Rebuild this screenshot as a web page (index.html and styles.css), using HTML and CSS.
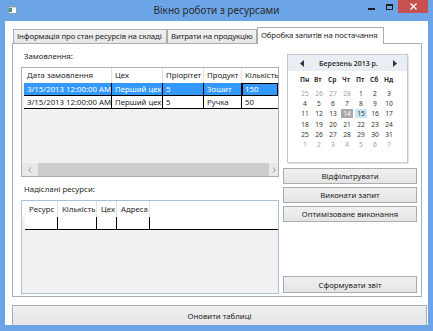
FILE: index.html
```html
<!DOCTYPE html>
<html lang="uk">
<head>
<meta charset="utf-8">
<title>Вікно роботи з ресурсами</title>
<link rel="stylesheet" href="styles.css">
</head>
<body>
<div class="window">
  <div class="titlebar">
    <div class="tb-left">
      <svg class="app-icon" width="9" height="8" viewBox="0 0 9 8">
        <rect x="0.5" y="0.5" width="8" height="7" fill="#fff" stroke="#8a9aa8"/>
        <rect x="1" y="2" width="3" height="4" fill="#3f9a86"/>
        <rect x="1" y="1" width="7" height="1" fill="#c9d3dc"/>
      </svg>
    </div>
    <div class="title">Вікно роботи з ресурсами</div>
    <div class="caption">
      <div class="cbtn cmin"><span class="min-glyph"></span></div>
      <div class="cbtn cmax"><span class="max-glyph"></span></div>
      <div class="cbtn cclose">
        <svg width="7" height="7" viewBox="0 0 7 7"><path d="M0.5 0.5 L6.5 6.5 M6.5 0.5 L0.5 6.5" stroke="#fff" stroke-width="1.4"/></svg>
      </div>
    </div>
  </div>

  <div class="client">
    <div class="tabs">
      <div class="tab-headers">
        <div class="tab t1">Інформація про стан ресурсів на складі</div>
        <div class="tab t2">Витрати на продукцію</div>
        <div class="tab t3 active">Обробка запитів на постачання</div>
      </div>
      <div class="tab-panel">
        <div class="col-left">
          <div class="label">Замовлення:</div>
          <div class="grid orders">
            <div class="g-head">
              <div class="hc o1">Дата замовлення</div>
              <div class="hc o2">Цех</div>
              <div class="hc o3">Пріорітет</div>
              <div class="hc o4">Продукт</div>
              <div class="hc o5">Кількість</div>
            </div>
            <div class="g-row sel">
              <div class="c o1">3/15/2013 12:00:00 AM</div>
              <div class="c o2">Перший цех</div>
              <div class="c o3">5</div>
              <div class="c o4">Зошит</div>
              <div class="c o5 focus">150</div>
            </div>
            <div class="g-row">
              <div class="c o1">3/15/2013 12:00:00 AM</div>
              <div class="c o2">Перший цех</div>
              <div class="c o3">5</div>
              <div class="c o4">Ручка</div>
              <div class="c o5">50</div>
            </div>
            <div class="g-fill"></div>
            <div class="hscroll">
              <div class="sb-arrow sb-left">
                <svg width="4" height="6" viewBox="0 0 4 6"><path d="M3 0.5 L1 3 L3 5.5" fill="none" stroke="#9a9a9a"/></svg>
              </div>
              <div class="sb-thumb"></div>
              <div class="sb-arrow sb-right">
                <svg width="4" height="6" viewBox="0 0 4 6"><path d="M1 0.5 L3 3 L1 5.5" fill="none" stroke="#9a9a9a"/></svg>
              </div>
            </div>
          </div>
          <div class="label">Надіслані ресурси:</div>
          <div class="grid sent">
            <div class="g-head">
              <div class="hc s1">Ресурс</div>
              <div class="hc s2">Кількість</div>
              <div class="hc s3">Цех</div>
              <div class="hc s4">Адреса</div>
            </div>
            <div class="g-row">
              <div class="c s1"></div>
              <div class="c s2"></div>
              <div class="c s3"></div>
              <div class="c s4"></div>
              <div class="c s-rest"></div>
            </div>
            <div class="g-fill"></div>
          </div>
        </div>

        <div class="col-right">
          <div class="calendar">
            <div class="cal-head">
              <svg width="4" height="7" viewBox="0 0 4 7"><path d="M4 0 L0 3.5 L4 7 Z" fill="#333"/></svg>
              <span class="cal-title">Березень 2013 р.</span>
              <svg width="4" height="7" viewBox="0 0 4 7"><path d="M0 0 L4 3.5 L0 7 Z" fill="#333"/></svg>
            </div>
            <div class="cal-grid">
              <div class="dn">Пн</div><div class="dn">Вт</div><div class="dn">Ср</div><div class="dn">Чт</div><div class="dn">Пт</div><div class="dn">Сб</div><div class="dn">Нд</div>
              <div class="d out"><span>25</span></div><div class="d out"><span>26</span></div><div class="d out"><span>27</span></div><div class="d out"><span>28</span></div><div class="d"><span>1</span></div><div class="d"><span>2</span></div><div class="d"><span>3</span></div>
              <div class="d"><span>4</span></div><div class="d"><span>5</span></div><div class="d"><span>6</span></div><div class="d"><span>7</span></div><div class="d"><span>8</span></div><div class="d"><span>9</span></div><div class="d"><span>10</span></div>
              <div class="d"><span>11</span></div><div class="d"><span>12</span></div><div class="d"><span>13</span></div><div class="d today"><span>14</span></div><div class="d selected"><span>15</span></div><div class="d"><span>16</span></div><div class="d"><span>17</span></div>
              <div class="d"><span>18</span></div><div class="d"><span>19</span></div><div class="d"><span>20</span></div><div class="d"><span>21</span></div><div class="d"><span>22</span></div><div class="d"><span>23</span></div><div class="d"><span>24</span></div>
              <div class="d"><span>25</span></div><div class="d"><span>26</span></div><div class="d"><span>27</span></div><div class="d"><span>28</span></div><div class="d"><span>29</span></div><div class="d"><span>30</span></div><div class="d"><span>31</span></div>
              <div class="d out"><span>1</span></div><div class="d out"><span>2</span></div><div class="d out"><span>3</span></div><div class="d out"><span>4</span></div><div class="d out"><span>5</span></div><div class="d out"><span>6</span></div><div class="d out"><span>7</span></div>
            </div>
          </div>
          <button class="btn b-filter">Відфільтрувати</button>
          <button class="btn b-run">Виконати запит</button>
          <button class="btn b-opt">Оптимізоване виконання</button>
          <button class="btn b-report">Сформувати звіт</button>
        </div>
      </div>
    </div>
    <button class="btn refresh">Оновити таблиці</button>
  </div>
</div>
</body>
</html>
```

FILE: styles.css
```css
* { box-sizing: border-box; margin: 0; padding: 0; }

html, body {
  width: 433px;
  height: 331px;
  overflow: hidden;
}

body {
  font-family: "Noto Sans", "Open Sans", sans-serif;
  font-size: 7.8px;
  color: #1e1e1e;
  background: #6ba5e8;
}

.window {
  width: 433px;
  height: 331px;
  background: #6ba5e8;
  display: flex;
  flex-direction: column;
}

/* ---------- title bar ---------- */
.titlebar {
  flex: none;
  height: 21px;
  display: grid;
  grid-template-columns: 1fr auto 1fr;
}

.tb-left { display: flex; }
.app-icon { margin: 6px 0 0 8px; }

.title {
  font-size: 10px;
  line-height: 21px;
  color: #2a2a2a;
}

.caption {
  justify-self: end;
  display: flex;
  margin-right: 5px;
  height: 13px;
}

.cbtn {
  height: 13px;
  display: flex;
  align-items: center;
  justify-content: center;
}

.cmin { width: 18px; }
.cmax { width: 18px; }
.cclose { width: 30px; background: #c75050; }

.min-glyph {
  width: 7px;
  height: 2px;
  background: #1b1b1b;
  margin-top: 4px;
}

.max-glyph {
  width: 7px;
  height: 6px;
  border: 1px solid #1b1b1b;
  border-top-width: 2px;
}

/* ---------- client ---------- */
.client {
  flex: 1;
  margin: 0 5px 6px;
  background: #fff;
  padding: 6px 1px 0 7px;
  display: flex;
  flex-direction: column;
}

.tabs {
  margin-right: 5px;
  display: flex;
  flex-direction: column;
}

.tab-headers {
  height: 16px;
  display: flex;
  align-items: flex-start;
  position: relative;
  z-index: 2;
}

.tab {
  flex: none;
  height: 14px;
  margin-top: 2px;
  border: 1px solid #acacac;
  border-bottom: none;
  background: linear-gradient(#f2f2f2, #e6e6e6);
  padding-left: 3px;
  line-height: 13px;
  white-space: nowrap;
  overflow: hidden;
  color: #1e1e1e;
  letter-spacing: -0.12px;
}

.t1 { width: 154px; margin-left: 1px; }
.t2 { width: 90px; }
.t3 { width: 127px; }

.tab.active {
  height: 17px;
  margin-top: 0;
  background: #fff;
  line-height: 15px;
}

.tab-panel {
  height: 254px;
  border: 1px solid #acacac;
  background: #fff;
  display: flex;
  gap: 4px;
  padding: 0 3px 1px 8px;
  position: relative;
  z-index: 1;
}

/* ---------- left column ---------- */
.col-left {
  width: 258px;
  display: flex;
  flex-direction: column;
}

.label {
  height: 23px;
  padding: 6px 0 0 3px;
  line-height: 12px;
  white-space: nowrap;
}

.grid {
  width: 258px;
  border: 1px solid #abadb3;
  background: #f1f1f1;
  display: flex;
  flex-direction: column;
  overflow: hidden;
}

.orders { height: 110px; }
.sent { height: 94px; border-color: #a9c0da; }

.g-head {
  flex: none;
  height: 15px;
  background: #fff;
  display: flex;
  padding-left: 2px;
}

.sent .g-head { height: 16px; padding-left: 3px; }

.hc {
  flex: none;
  border-right: 1px solid #e3e3e3;
  padding-left: 3px;
  white-space: nowrap;
  overflow: hidden;
  line-height: 15px;
}

.sent .hc { padding-left: 4px; line-height: 17px; }

.g-row {
  flex: none;
  display: flex;
  padding-left: 2px;
  height: 13px;
}

.sent .g-row { padding-left: 3px; }

.c {
  flex: none;
  height: 13px;
  border-right: 1px solid #000;
  border-bottom: 1px solid #000;
  background: #fff;
  padding-left: 3px;
  line-height: 12px;
  white-space: nowrap;
  overflow: hidden;
}

.g-row.sel .c {
  background: #3399ff;
  color: #fff;
}

.c.focus {
  outline: 1px solid #000;
  outline-offset: -1px;
}

.o1 { width: 88px; }
.o2 { width: 51px; }
.o3 { width: 41px; }
.o4 { width: 38px; }
.o5 { width: 36px; border-right: none; }
.hc.o5 { border-right: none; }

.s1 { width: 33px; }
.s2 { width: 39px; }
.s3 { width: 20px; }
.s4 { width: 33px; }
.s-rest { flex: 1; border-right: none; }

.g-fill { flex: 1; }

.hscroll {
  flex: none;
  height: 13px;
  display: flex;
  background: #e8e8e8;
}

.sb-arrow {
  display: flex;
  align-items: center;
  justify-content: center;
}

.sb-left { width: 16px; }
.sb-right { width: 9px; }

.sb-thumb {
  flex: 1;
  background: #cdcdcd;
}

/* ---------- right column ---------- */
.col-right {
  width: 135px;
  display: flex;
  flex-direction: column;
}

.calendar {
  width: 121px;
  height: 109px;
  margin: 10px 0 0 4px;
  border: 1px solid #c4c8cc;
  background: #fff;
  box-shadow: 1px 1px 0 #e6e6e6;
}

.cal-head {
  height: 16px;
  background: #e9eef4;
  display: flex;
  align-items: center;
  justify-content: space-between;
  padding: 0 10px 0 12px;
}

.cal-title {
  font-size: 7px;
  font-weight: 600;
  color: #333;
}

.cal-grid {
  display: grid;
  grid-template-columns: repeat(7, 14px);
  grid-template-rows: 17px repeat(6, 10.3px);
  margin-left: 11px;
  font-size: 6.6px;
}

.dn {
  font-weight: 700;
  color: #333;
  display: flex;
  align-items: center;
  padding-left: 1px;
}

.d {
  display: flex;
  align-items: center;
  color: #333;
}

.d span {
  width: 12px;
  height: 9px;
  line-height: 9px;
  text-align: center;
}

.d.out { color: #a0a0a0; }

.d.today span { background: #a8a8a8; color: #fff; }
.d.selected span { background: #cbe5f7; }

.btn {
  font-family: inherit;
  font-size: 7.8px;
  color: #1e1e1e;
  border: 1px solid #acacac;
  background: linear-gradient(#f0f0f0, #e5e5e5);
  text-align: center;
  height: 16px;
  line-height: 14px;
  width: 134px;
}

.b-filter { margin-top: 5px; }
.b-run { margin-top: 3px; }
.b-opt { margin-top: 3px; }
.b-report { margin-top: auto; margin-bottom: 2px; height: 17px; }

.refresh {
  flex: 1;
  width: auto;
  height: auto;
  margin-top: 8px;
  border-bottom: none;
}
```
